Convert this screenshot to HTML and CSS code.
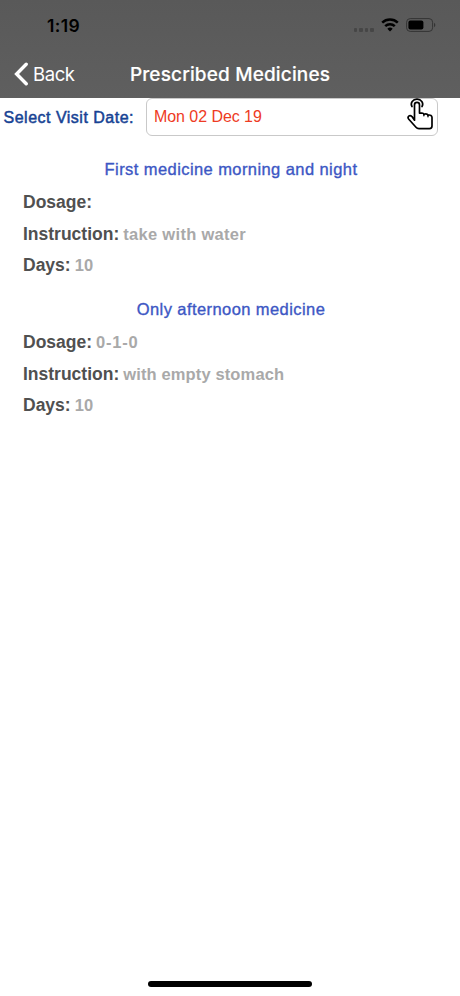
FILE: index.html
```html
<!DOCTYPE html>
<html lang="en">
<head>
<meta charset="utf-8">
<title>Prescribed Medicines</title>
<link rel="stylesheet" href="styles.css">
</head>
<body>
<div class="screen">
  <header class="header">
    <div class="status">
      <span class="time">1:19</span>
      <div class="indicators">
        <span class="signal"><i></i><i></i><i></i><i></i></span>
        <svg class="wifi" width="18" height="14" viewBox="0 0 18 14">
          <path d="M1.2 4.7a11.4 11.4 0 0 1 15.6 0M4.2 8.1a7 7 0 0 1 9.6 0" fill="none" stroke="#000" stroke-width="2.5"/>
          <path d="M9 13.4 6.3 10.8a4 4 0 0 1 5.4 0z"/>
        </svg>
        <svg class="battery" width="30" height="14" viewBox="0 0 30 14">
          <rect x=".6" y=".6" width="26" height="12.8" rx="3.6" fill="none" stroke="#343434" stroke-width="1"/>
          <rect x="2.4" y="2.4" width="15" height="9.2" rx="2"/>
          <path d="M28 4.8c1.8.7 1.8 3.7 0 4.4z" fill="#343434"/>
        </svg>
      </div>
    </div>
    <nav class="nav">
      <a class="back">
        <svg width="15" height="24" viewBox="0 0 15 24"><path d="M13.2 2.2 3.6 12l9.6 9.8" fill="none" stroke="#fff" stroke-width="3.4" stroke-linecap="round" stroke-linejoin="miter"/></svg>
        <span>Back</span>
      </a>
      <h1 class="title">Prescribed Medicines</h1>
    </nav>
  </header>
  <main>
    <div class="visit">
      <label class="visit-label">Select Visit Date:</label>
      <div class="select">
        <span class="date">Mon 02 Dec 19</span>
        <svg class="tap" width="28" height="33" viewBox="0 0 28 33" fill="none" stroke="#000" stroke-width="1.7" stroke-linecap="round" stroke-linejoin="round">
          <path d="M6 8.6C3.9 4.8 6.9 1.2 11 1.2s7.1 3.6 5 7.4"/>
          <path d="M8.5 22.2V6.9c0-3.3 5-3.3 5 0v8.2l2.5-.1c1 0 1.6.4 1.9 1.2 2.2-.6 3.6-.2 4.1.9 2.6-.4 4 .4 4 2.4v8.6c0 1.6-1 2.5-2.5 2.5H13c-1.4 0-2.2-.4-3-1.4l-7.2-8c-2-2.5.8-4.7 3.2-2.6z"/>
          <path d="M17.9 16.2v1.6M22 17.1v1.6" stroke-width="1.4"/>
        </svg>
      </div>
    </div>
    <section class="medicine">
      <h2 class="name name-first">First medicine morning and night</h2>
      <p class="row"><b class="key">Dosage:</b></p>
      <p class="row"><b class="key">Instruction:</b><span class="value wide">take with water</span></p>
      <p class="row days"><b class="key">Days:</b><span class="value">10</span></p>
    </section>
    <section class="medicine">
      <h2 class="name">Only afternoon medicine</h2>
      <p class="row"><b class="key">Dosage:</b><span class="value dose">0-1-0</span></p>
      <p class="row"><b class="key">Instruction:</b><span class="value">with empty stomach</span></p>
      <p class="row days"><b class="key">Days:</b><span class="value">10</span></p>
    </section>
  </main>
  <div class="home-bar"></div>
</div>
</body>
</html>
```

FILE: styles.css
```css
* { box-sizing: border-box; }
body { margin: 0; background: #fff; font-family: "Liberation Sans", Arial, sans-serif; }
.screen { display: flex; flex-direction: column; width: 460px; height: 996px; overflow: hidden; }
main { flex: 1; }
.header { height: 98px; background: linear-gradient(#595959, #5f5f5f); }
.status { display: flex; justify-content: space-between; height: 50px; padding: 15px 24px 0 47px; }
.time { font: 600 17.5px/22px Inter, sans-serif; color: #000; letter-spacing: .4px; }
.indicators { display: flex; align-items: flex-start; padding-top: 3px; }
.signal { display: flex; gap: 2px; margin: 10px 7px 0 0; }
.signal i { width: 3.6px; height: 4px; border-radius: 1px; background: #464646; }
.wifi { margin-right: 7px; }
.nav { position: relative; display: flex; justify-content: center; height: 48px; color: #fff; }
.back { position: absolute; left: 13px; top: 12px; display: flex; align-items: center; gap: 5px; font: 400 18.5px/24px Inter, sans-serif; letter-spacing: -.4px; }
.title { margin: 0; padding-top: 1px; font: 500 19px/48px Inter, sans-serif; letter-spacing: .15px; -webkit-text-stroke: .15px; }
.visit { display: flex; height: 38px; padding-left: 3.5px; }
.visit-label { width: 142.5px; font-size: 16px; line-height: 39px; color: #174394; -webkit-text-stroke: .5px; letter-spacing: .5px; white-space: nowrap; }
.select { position: relative; width: 292px; height: 38px; padding-left: 7px; border: 1px solid #c9c9c9; border-radius: 6px; }
.date { font-size: 16px; line-height: 35px; color: #ee3b24; letter-spacing: -.06px; }
.tap { position: absolute; left: 259px; top: -1px; }
.medicine { padding-left: 23px; height: 140px; }
.name { margin: 0 0 0 -21px; padding-top: 22px; height: 50px; text-align: center; font-size: 16.5px; line-height: 22px; font-weight: 400; color: #3c57c4; letter-spacing: .42px; -webkit-text-stroke: .35px; }
.row { display: flex; gap: 4px; margin: 0; height: 32px; line-height: 32px; white-space: nowrap; }
.days { line-height: 30px; }
.key { font-size: 17.5px; color: #505050; }
.value { font-size: 16.5px; font-weight: 700; color: #a9a9a9; letter-spacing: .13px; }
.wide { letter-spacing: .3px; }
.dose { letter-spacing: .8px; }
.home-bar { flex: none; width: 164px; height: 6px; margin: 0 auto 9px; border-radius: 3px; background: #000; }
```
